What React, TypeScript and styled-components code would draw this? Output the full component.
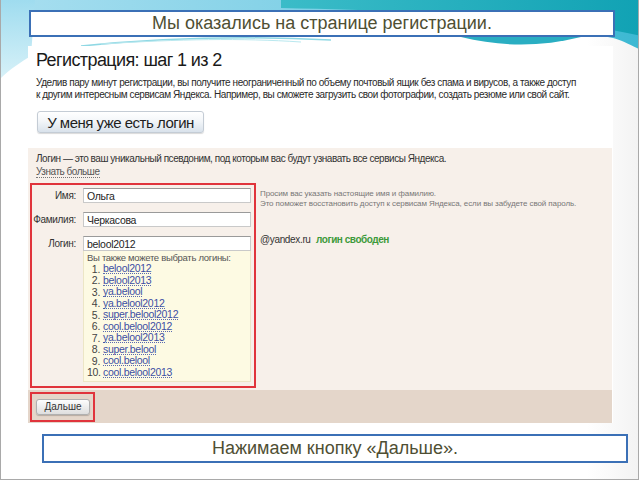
import React from "react";
import styled, { createGlobalStyle } from "styled-components";

const GlobalStyle = createGlobalStyle`
  html, body {
    margin: 0;
    padding: 0;
    background: #ffffff;
  }
  body {
    font-family: "Liberation Sans", Arial, sans-serif;
  }
`;

const logins = [
  "belool2012",
  "belool2013",
  "ya.belool",
  "ya.belool2012",
  "super.belool2012",
  "cool.belool2012",
  "ya.belool2013",
  "super.belool",
  "cool.belool",
  "cool.belool2013",
];

function Waves() {
  return (
    <S.Waves width="640" height="90" viewBox="0 0 640 90">
      <defs>
        <linearGradient id="sky" x1="0" y1="0" x2="1" y2="0">
          <stop offset="0" stopColor="#a9dff0" />
          <stop offset="0.5" stopColor="#7fd0e6" />
          <stop offset="1" stopColor="#3cb8d2" />
        </linearGradient>
        <linearGradient id="sea" x1="0" y1="0" x2="1" y2="0">
          <stop offset="0" stopColor="#3bbcc8" />
          <stop offset="1" stopColor="#11a2b4" />
        </linearGradient>
        <linearGradient id="wedge" x1="0" y1="0" x2="0" y2="1">
          <stop offset="0" stopColor="#9fdcef" />
          <stop offset="1" stopColor="#d7f1f8" />
        </linearGradient>
      </defs>
      <path d="M0 0 H640 V50 C628 44 620 40 612 38 C520 20 300 16 120 16 C70 16 30 18 0 22 Z" fill="url(#sky)" />
      <path d="M280 0 H640 V36 C580 22 480 12 280 8 Z" fill="url(#sea)" />
      <path d="M0 0 H34 L30 56 C20 62 8 70 0 78 Z" fill="url(#wedge)" />
      <path d="M460 37 C500 47 540 47 580 37 Z" fill="#2aaec2" />
      <path d="M80 46 C160 38 250 36 330 40" stroke="#8fd8e4" strokeWidth="1.5" fill="none" />
      <path d="M100 44 C180 39 240 38 300 42" stroke="#b9e8ef" strokeWidth="1" fill="none" />
    </S.Waves>
  );
}

export default function App() {
  return (
    <>
      <GlobalStyle />
      <S.Slide>
        <Waves />
        <S.Content>
          <S.Banner>Мы оказались на странице регистрации.</S.Banner>
          <S.Screen>
            <S.Heading>Регистрация: шаг 1 из 2</S.Heading>
            <S.Intro>
              Уделив пару минут регистрации, вы получите неограниченный по объему почтовый ящик без спама и вирусов, а также доступ
              <br />
              к другим интересным сервисам Яндекса. Например, вы сможете загрузить свои фотографии, создать резюме или свой сайт.
            </S.Intro>
            <S.LoginButton>У меня уже есть логин</S.LoginButton>
            <S.Panel>
              <S.PanelBody>
                <S.Note>
                  Логин — это ваш уникальный псевдоним, под которым вас будут узнавать все сервисы Яндекса.
                  <br />
                  <S.Dotted>Узнать больше</S.Dotted>
                </S.Note>
                <S.FormRow>
                  <S.Highlight>
                    <S.Fields>
                      <S.Label>Имя:</S.Label>
                      <S.Input>Ольга</S.Input>
                      <S.Label>Фамилия:</S.Label>
                      <S.Input>Черкасова</S.Input>
                      <S.Label>Логин:</S.Label>
                      <S.Input>belool2012</S.Input>
                      <span />
                      <S.Suggest>
                        <S.SuggestTitle>Вы также можете выбрать логины:</S.SuggestTitle>
                        {logins.map((login, i) => (
                          <S.SuggestItem key={login}>
                            <S.Num>{i + 1}.</S.Num>
                            <S.Link>{login}</S.Link>
                          </S.SuggestItem>
                        ))}
                      </S.Suggest>
                    </S.Fields>
                  </S.Highlight>
                  <S.Side>
                    <S.Hint>
                      Просим вас указать настоящие имя и фамилию.
                      <br />
                      Это поможет восстановить доступ к сервисам Яндекса, если вы забудете свой пароль.
                    </S.Hint>
                    <S.Domain>
                      @yandex.ru <S.Free>логин свободен</S.Free>
                    </S.Domain>
                  </S.Side>
                </S.FormRow>
              </S.PanelBody>
              <S.Footer>
                <S.NextBox>
                  <S.NextButton>Дальше</S.NextButton>
                </S.NextBox>
              </S.Footer>
            </S.Panel>
          </S.Screen>
          <S.Caption>Нажимаем кнопку «Дальше».</S.Caption>
        </S.Content>
      </S.Slide>
    </>
  );
}

const S = {
  Slide: styled.div`
    position: relative;
    width: 639px;
    height: 480px;
    box-sizing: border-box;
    border-left: 1px solid #a9a9a9;
    border-right: 1px solid #a9a9a9;
    border-bottom: 1px solid #a9a9a9;
    background: linear-gradient(90deg, #ffffff 0%, #ffffff 92%, #f3f3f3 100%);
    overflow: hidden;
  `,
  Waves: styled.svg`
    position: absolute;
    top: 0;
    left: 0;
  `,
  Content: styled.div`
    position: relative;
    display: flex;
    flex-direction: column;
    align-items: flex-start;
    padding-top: 10px;
  `,
  Banner: styled.div`
    margin-left: 28px;
    width: 586px;
    height: 27px;
    box-sizing: border-box;
    border: 2px solid #3b70b6;
    background: #ffffff;
    display: flex;
    align-items: center;
    justify-content: center;
    font-size: 18px;
    color: #4f4f33;
  `,
  Screen: styled.div`
    margin-left: 27px;
    margin-top: 9px;
    width: 585px;
    background: #ffffff;
    display: flex;
    flex-direction: column;
    align-items: flex-start;
    padding-top: 4px;
  `,
  Heading: styled.div`
    margin-left: 8px;
    font-size: 18px;
    line-height: 20px;
    letter-spacing: -0.6px;
    color: #1a1a1a;
  `,
  Intro: styled.div`
    margin-left: 8px;
    margin-top: 7px;
    font-size: 10px;
    line-height: 12px;
    letter-spacing: -0.42px;
    color: #2a2a2a;
  `,
  LoginButton: styled.div`
    margin-left: 9px;
    margin-top: 10px;
    width: 167px;
    height: 22px;
    box-sizing: border-box;
    border: 1px solid #c4ccd5;
    border-radius: 3px;
    background: linear-gradient(#ffffff 0%, #f3f6f9 45%, #d9e2eb 100%);
    box-shadow: 0 1px 1px rgba(0, 0, 0, 0.15);
    display: flex;
    align-items: center;
    justify-content: center;
    font-size: 15px;
    letter-spacing: -0.5px;
    color: #1e1e1e;
  `,
  Panel: styled.div`
    margin-top: 15px;
    width: 584px;
    display: flex;
    flex-direction: column;
    background: #f7f0ea;
  `,
  PanelBody: styled.div`
    padding: 4px 0 2px 2px;
    display: flex;
    flex-direction: column;
  `,
  Note: styled.div`
    margin-left: 6px;
    font-size: 10px;
    line-height: 13px;
    letter-spacing: -0.46px;
    color: #333333;
  `,
  Dotted: styled.span`
    color: #555555;
    border-bottom: 1px dotted #777777;
  `,
  FormRow: styled.div`
    margin-top: 5px;
    display: flex;
    align-items: flex-start;
  `,
  Highlight: styled.div`
    width: 226px;
    box-sizing: border-box;
    border: 2px solid #e0343c;
    padding: 3px 0 4px 0;
  `,
  Fields: styled.div`
    display: grid;
    grid-template-columns: 44px 168px;
    column-gap: 7px;
    row-gap: 9px;
    align-items: center;
  `,
  Label: styled.div`
    text-align: right;
    font-size: 10px;
    letter-spacing: -0.3px;
    color: #333333;
  `,
  Input: styled.div`
    height: 15px;
    box-sizing: border-box;
    background: #ffffff;
    border: 1px solid #c9c9c9;
    border-top-color: #9a9a9a;
    padding-left: 3px;
    display: flex;
    align-items: center;
    font-size: 10.5px;
    letter-spacing: -0.3px;
    color: #1e1e1e;
  `,
  Suggest: styled.div`
    margin-top: -9px;
    box-sizing: border-box;
    background: #fdfae3;
    border: 1px solid #ece6c6;
    border-top: none;
    padding: 1px 0 3px 3px;
    display: flex;
    flex-direction: column;
  `,
  SuggestTitle: styled.div`
    font-size: 9.5px;
    line-height: 11px;
    letter-spacing: -0.3px;
    color: #555555;
  `,
  SuggestItem: styled.div`
    display: flex;
    align-items: center;
    gap: 3px;
    height: 11.5px;
    font-size: 10.5px;
    letter-spacing: -0.3px;
  `,
  Num: styled.span`
    width: 13px;
    text-align: right;
    color: #444444;
  `,
  Link: styled.span`
    color: #3c4fa3;
    line-height: 10px;
    border-bottom: 1px dotted #5a6ab0;
  `,
  Side: styled.div`
    padding: 6px 0 0 4px;
    display: flex;
    flex-direction: column;
  `,
  Hint: styled.div`
    height: 45px;
    font-size: 8px;
    line-height: 10px;
    letter-spacing: -0.1px;
    color: #777777;
  `,
  Domain: styled.div`
    font-size: 10px;
    line-height: 12px;
    letter-spacing: -0.35px;
    color: #333333;
  `,
  Free: styled.span`
    margin-left: 3px;
    font-weight: bold;
    letter-spacing: -0.45px;
    color: #3d9a3a;
  `,
  Footer: styled.div`
    height: 33px;
    background: #e4d6ca;
    display: flex;
    align-items: center;
    padding-left: 2px;
  `,
  NextBox: styled.div`
    width: 65px;
    height: 30px;
    box-sizing: border-box;
    border: 2px solid #e0343c;
    padding: 5px 0 0 4px;
  `,
  NextButton: styled.div`
    width: 54px;
    height: 16px;
    box-sizing: border-box;
    border: 1px solid #b0b0b0;
    border-radius: 3px;
    background: linear-gradient(#fdfdfd, #dedede);
    box-shadow: 0 1px 1px rgba(0, 0, 0, 0.2);
    display: flex;
    align-items: center;
    justify-content: center;
    font-size: 10px;
    color: #333333;
  `,
  Caption: styled.div`
    margin-left: 41px;
    margin-top: 11px;
    width: 586px;
    height: 29px;
    box-sizing: border-box;
    border: 2px solid #3b70b6;
    background: #ffffff;
    display: flex;
    align-items: center;
    justify-content: center;
    font-size: 18px;
    color: #4f4f33;
  `,
};
